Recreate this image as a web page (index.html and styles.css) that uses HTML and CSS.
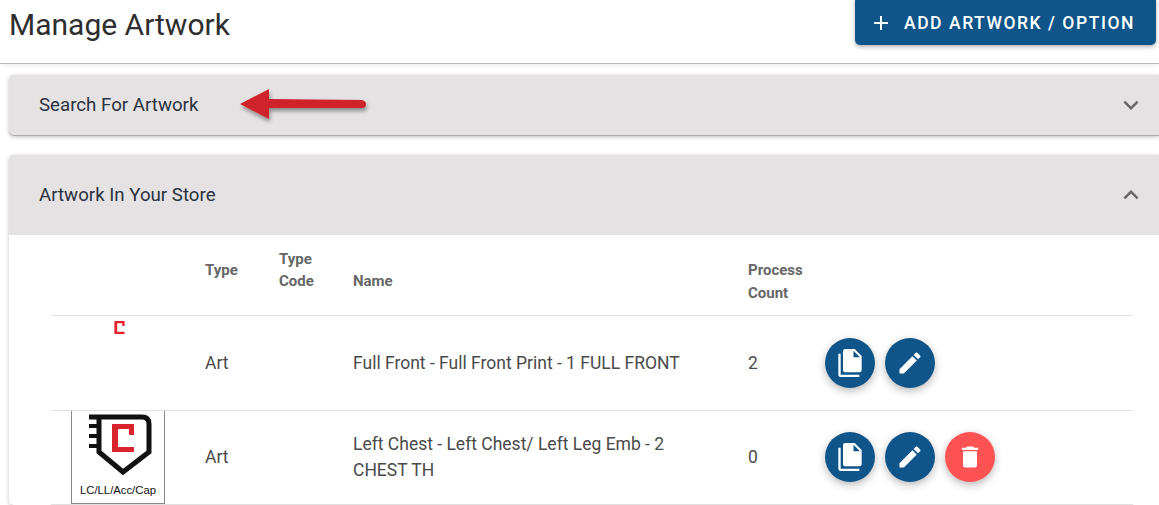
FILE: index.html
```html
<!DOCTYPE html>
<html lang="en">
<head>
  <meta charset="UTF-8" />
  <meta name="viewport" content="width=device-width, initial-scale=1.0"/>
  <title>Manage Artwork</title>
  <link rel="stylesheet" href="styles.css">
</head>
<body>

  <header class="top-bar">
    <h1>Manage Artwork</h1>
    <button class="btn-add">
      <svg viewBox="0 0 24 24"><path d="M19,13H13V19H11V13H5V11H11V5H13V11H19V13Z"/></svg>
      Add Artwork / Option
    </button>
  </header>

  <main>
    <section class="panel panel-search">
      <div class="panel-head">
        <span>Search For Artwork</span>
        <svg class="chevron" viewBox="0 0 24 24"><path d="M7.41,8.58L12,13.17L16.59,8.58L18,10L12,16L6,10L7.41,8.58Z"/></svg>
      </div>
      <!-- red arrow pasted over the screenshot -->
      <svg class="arrow" viewBox="0 0 140 44">
        <defs>
          <filter id="arrowShadow" x="-10%" y="-30%" width="120%" height="170%">
            <feDropShadow dx="1" dy="3" stdDeviation="2" flood-color="#000" flood-opacity="0.4"/>
          </filter>
        </defs>
        <path filter="url(#arrowShadow)" fill="#d0232c" d="M2 16 L31 1 V11 L124 12 Q128 13 128 16 Q128 20 124 20 L31 20 V31 Z"/>
      </svg>
    </section>

    <section class="panel panel-store">
      <div class="panel-head tall">
        <span>Artwork In Your Store</span>
        <svg class="chevron" viewBox="0 0 24 24"><path d="M7.41,15.41L12,10.83L16.59,15.41L18,14L12,8L6,14L7.41,15.41Z"/></svg>
      </div>
      <div class="panel-body">
        <table class="art-table">
          <thead>
            <tr>
              <th class="col-thumb"></th>
              <th class="col-type raised">Type</th>
              <th class="col-code raised">Type<br>Code</th>
              <th class="col-name">Name</th>
              <th class="col-count">Process<br>Count</th>
              <th></th>
            </tr>
          </thead>
          <tbody>
            <tr class="row-first">
              <td class="thumb-cell">
                <div class="thumb-plain">
                  <svg class="mini-c" viewBox="40 13 22 28"><path d="M40 13H62V24H57V18H46V36H62V41H40Z"/></svg>
                </div>
              </td>
              <td>Art</td>
              <td></td>
              <td>Full Front - Full Front Print - 1 FULL FRONT</td>
              <td>2</td>
              <td>
                <div class="actions">
                  <button class="fab"><svg viewBox="0 0 24 24"><path d="M15,7H20.5L15,1.5V7M8,0H16L22,6V18A2,2 0 0,1 20,20H8C6.89,20 6,19.1 6,18V2A2,2 0 0,1 8,0M4,4V22H20V24H4A2,2 0 0,1 2,22V4H4Z"/></svg></button>
                  <button class="fab"><svg viewBox="0 0 24 24"><path d="M20.71,7.04C21.1,6.65 21.1,6 20.71,5.63L18.37,3.29C18,2.9 17.35,2.9 16.96,3.29L15.12,5.12L18.87,8.87M3,17.25V21H6.75L17.81,9.93L14.06,6.18L3,17.25Z"/></svg></button>
                </div>
              </td>
            </tr>
            <tr>
              <td class="thumb-cell">
                <div class="thumb-box">
                  <svg class="logo" viewBox="0 0 92 68">
                    <path class="logo-line" d="M17 6H70Q77 6 77 13V41L51 61L27 41V6"/>
                    <path class="logo-line thin" d="M17 15H28M17 25H28M17 35H28"/>
                    <path class="logo-c" d="M40 13H62V24H57V18H46V36H62V41H40Z"/>
                  </svg>
                  <span class="thumb-label">LC/LL/Acc/Cap</span>
                </div>
              </td>
              <td>Art</td>
              <td></td>
              <td>Left Chest - Left Chest/ Left Leg Emb - 2<br>CHEST TH</td>
              <td>0</td>
              <td>
                <div class="actions">
                  <button class="fab"><svg viewBox="0 0 24 24"><path d="M15,7H20.5L15,1.5V7M8,0H16L22,6V18A2,2 0 0,1 20,20H8C6.89,20 6,19.1 6,18V2A2,2 0 0,1 8,0M4,4V22H20V24H4A2,2 0 0,1 2,22V4H4Z"/></svg></button>
                  <button class="fab"><svg viewBox="0 0 24 24"><path d="M20.71,7.04C21.1,6.65 21.1,6 20.71,5.63L18.37,3.29C18,2.9 17.35,2.9 16.96,3.29L15.12,5.12L18.87,8.87M3,17.25V21H6.75L17.81,9.93L14.06,6.18L3,17.25Z"/></svg></button>
                  <button class="fab danger"><svg viewBox="0 0 24 24"><path d="M19,4H15.5L14.5,3H9.5L8.5,4H5V6H19M6,19A2,2 0 0,0 8,21H16A2,2 0 0,0 18,19V7H6V19Z"/></svg></button>
                </div>
              </td>
            </tr>
          </tbody>
        </table>
      </div>
    </section>
  </main>

</body>
</html>
```

FILE: styles.css
```css
html, body {
  height: 100%;
  overflow: hidden;
}

body {
  margin: 0; padding: 0;
  font-family: Roboto, sans-serif;
  background: #fff; color: #3a3a3a;
}

.top-bar {
  display: flex;
  justify-content: space-between;
  align-items: flex-start;
  height: 63px;
  padding: 0 3px 0 9px;
  border-bottom: 1px solid #b9b9b9;
  box-shadow: 0 2px 4px rgba(0,0,0,0.06);
}

.top-bar h1 {
  margin: 0;
  padding-top: 7px;
  font-size: 30px;
  line-height: 36px;
  font-weight: 400;
  color: #2e2e2e;
}

.btn-add {
  display: flex;
  align-items: center;
  gap: 11px;
  height: 49px;
  margin-top: -4px;
  padding: 4px 21px 0 14px;
  background: #10558a;
  color: #fff;
  border: none;
  border-radius: 5px;
  font-family: inherit;
  font-size: 17.5px;
  font-weight: 500;
  letter-spacing: 1.55px;
  text-transform: uppercase;
  box-shadow: 0 2px 4px rgba(0,0,0,0.3);
}

.btn-add svg {
  width: 24px; height: 24px;
  fill: #fff;
}

main {
  padding: 11px 0 0 9px;
}

.panel {
  position: relative;
  background: #fff;
  border-radius: 5px 0 0 5px;
  box-shadow: 0 1px 4px rgba(0,0,0,0.25);
}

.panel-search { margin-bottom: 19px; }

.panel-head {
  display: flex;
  justify-content: space-between;
  align-items: center;
  height: 61px;
  padding: 0 13px 0 30px;
  background: #e4e2e3;
  border-radius: 5px 0 0 5px;
  border-bottom: 1px solid #a9a9a9;
  box-sizing: border-box;
  font-size: 18.7px;
  color: #2b3240;
}

.panel-head.tall {
  height: 80px;
  padding-bottom: 1px;
  border-bottom: none;
  border-radius: 5px 0 0 0;
}

.chevron {
  width: 30px; height: 30px;
  fill: #666;
}

.arrow {
  position: absolute;
  left: 229px; top: 13px;
  width: 140px; height: 44px;
}

.panel-body {
  padding: 0 26px 0 42px;
}

.art-table {
  width: 100%;
  border-collapse: collapse;
  table-layout: fixed;
  font-size: 17.5px;
  color: #4a4a4a;
}

.art-table th {
  height: 80px;
  padding: 14px 0 0 12px;
  box-sizing: border-box;
  text-align: left;
  font-size: 15px;
  line-height: 23px;
  font-weight: 700;
  color: #666;
  border-bottom: 1px solid #e0e0e0;
}

.art-table th.raised { padding-bottom: 10px; padding-top: 0; line-height: 22px; }

.col-thumb { width: 142px; }
.col-type { width: 74px; }
.col-code { width: 74px; }
.col-name { width: 395px; }
.col-count { width: 77px; }

.art-table td {
  height: 94px;
  padding: 0 0 0 12px;
  box-sizing: border-box;
  line-height: 26px;
  border-bottom: 1px solid #e0e0e0;
}

.art-table .row-first td { height: 95px; }

.art-table td.thumb-cell {
  padding: 0;
  vertical-align: top;
}

.thumb-plain {
  display: flex;
  justify-content: center;
  width: 136px;
  padding-top: 5px;
}

.mini-c {
  width: 11px; height: 13px;
  fill: #e3222e;
}

.thumb-box {
  display: flex;
  flex-direction: column;
  align-items: center;
  width: 92px;
  height: 92px;
  margin-left: 20px;
  border: 1px solid #8a8a8a;
  border-top: none;
}

.logo { width: 92px; height: 68px; }

.logo-line {
  fill: none;
  stroke: #111;
  stroke-width: 5;
}

.logo-line.thin { stroke-width: 4; }

.logo-c { fill: #d9232e; }

.thumb-label {
  margin-top: 4px;
  font-family: "Liberation Sans", Arial, sans-serif;
  font-size: 11.3px;
  line-height: 14px;
  color: #111;
}

.actions {
  display: flex;
  gap: 10px;
}

.fab {
  display: flex;
  align-items: center;
  justify-content: center;
  width: 50px; height: 50px;
  padding: 0;
  border: none;
  border-radius: 50%;
  background: #10558a;
  box-shadow: 0 3px 8px rgba(0,0,0,0.28);
}

.fab svg {
  width: 28px; height: 28px;
  fill: #fff;
}

.fab.danger { background: #ff5252; }
```
